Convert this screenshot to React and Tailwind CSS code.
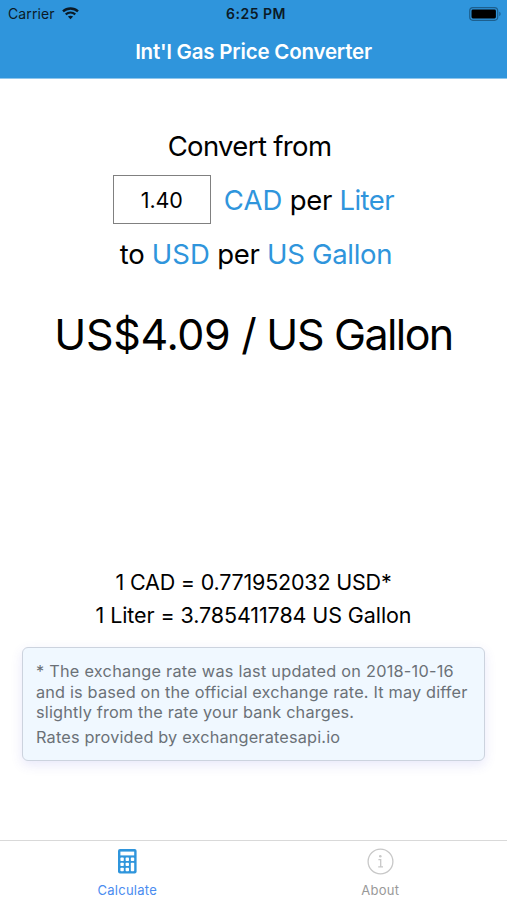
import React from "react"

const WifiIcon = () => (
  <svg width="17" height="13" viewBox="0 0 17 13" fill="none">
    <path d="M1 4.4C5.2 .6 11.8 .6 16 4.4" stroke="#0b1a26" strokeWidth="2.4" />
    <path d="M3.7 7.4C6.5 5 10.5 5 13.3 7.4" stroke="#0b1a26" strokeWidth="2.1" />
    <path d="M8.5 12.2L5.9 9.6C7.3 8.3 9.7 8.3 11.1 9.6Z" fill="#0b1a26" />
  </svg>
)

const BatteryIcon = () => (
  <svg width="33" height="14" viewBox="0 0 33 14" fill="none">
    <rect x=".7" y=".7" width="28" height="12.6" rx="3.2" stroke="#1d5f8e" strokeWidth="1.2" />
    <rect x="2.5" y="2.5" width="24.4" height="9" rx="1.4" fill="#000" />
    <path d="M30.3 4.8C32 5.4 32 8.6 30.3 9.2Z" fill="#1d5f8e" />
  </svg>
)

const CalculatorIcon = () => (
  <svg width="19" height="25" viewBox="0 0 19 25">
    <rect width="18.6" height="24.6" rx="2" fill="#2f95dc" />
    <g fill="#fff">
      <rect x="2.4" y="2.6" width="13.8" height="3.8" />
      <rect x="2.4" y="8.6" width="3.4" height="3.4" rx=".8" />
      <rect x="7.6" y="8.6" width="3.4" height="3.4" rx=".8" />
      <rect x="12.8" y="8.6" width="3.4" height="3.4" rx=".8" />
      <rect x="2.4" y="13.7" width="3.4" height="3.4" rx=".8" />
      <rect x="7.6" y="13.7" width="3.4" height="3.4" rx=".8" />
      <rect x="2.4" y="18.8" width="3.4" height="3.4" rx=".8" />
      <rect x="7.6" y="18.8" width="3.4" height="3.4" rx=".8" />
      <rect x="12.8" y="13.7" width="3.4" height="8.5" rx=".8" />
    </g>
  </svg>
)

const InfoIcon = () => (
  <svg width="27" height="27" viewBox="0 0 27 27" fill="none" stroke="#c8c8c8">
    <circle cx="13.5" cy="13.5" r="12.4" strokeWidth="1.3" />
    <circle cx="13.3" cy="8.2" r="1.3" fill="#c8c8c8" stroke="none" />
    <path d="M11.4 11.6H13.7V18.8M11.2 18.9H16" strokeWidth="1.3" />
  </svg>
)

const Header = () => {
  return (
    <header className="h-[79px] bg-[#2f95dc] border-b border-[#8ec6ec]">
      <div className="grid grid-cols-3 items-center h-[27px] pl-2 pr-[5px] text-[#0b1a26]">
        <div className="flex items-center gap-[7px]">
          <span className="text-[14px] tracking-[0.1px]">Carrier</span>
          <WifiIcon />
        </div>
        <span className="pl-[2px] text-center text-[14px] font-semibold tracking-[0.5px]">
          6:25 PM
        </span>
        <div className="flex justify-end">
          <BatteryIcon />
        </div>
      </div>
      <h1 className="text-center text-white text-[20.5px] leading-[50px] font-semibold tracking-[-0.2px]">
        Int'l Gas Price Converter
      </h1>
    </header>
  )
}

const Converter = () => {
  return (
    <section className="text-center text-[27.5px] leading-[54px] tracking-[-0.2px] whitespace-nowrap">
      <p className="pr-2 tracking-[-0.65px]">Convert from</p>
      <div className="flex items-center justify-center h-[54px]">
        <input
          className="w-[98px] h-[49px] mr-[13px] mb-px border border-[#808080] text-center text-[21.5px] tracking-[-0.1px]"
          defaultValue="1.40"
        />
        <p className="tracking-[-0.35px]">
          <span className="text-[#2f95dc] tracking-[0.1px]">CAD</span> per{" "}
          <span className="text-[#2f95dc] tracking-[-0.5px]">Liter</span>
        </p>
      </div>
      <p className="pl-[5px] tracking-[-0.3px]">
        to <span className="text-[#2f95dc] tracking-[0px]">USD</span> per{" "}
        <span className="text-[#2f95dc]">US Gallon</span>
      </p>
    </section>
  )
}

const RateNote = () => {
  return (
    <div className="mx-[22px] mt-[14px] h-[114px] pt-[13px] px-[13px] bg-[#f0f8ff] border border-[#ccd3de] rounded-md shadow-[0_4px_12px_rgba(80,80,220,0.13)] text-[16.3px] leading-[20.5px] tracking-[0.17px] text-[#6b7177] whitespace-nowrap">
      <p>
        <span className="tracking-[0.25px]">
          * The exchange rate was last updated on 2018-10-16
        </span>
        <br />
        and is based on the official exchange rate. It may differ
        <br />
        slightly from the rate your bank charges.
      </p>
      <p className="mt-[4px]">Rates provided by exchangeratesapi.io</p>
    </div>
  )
}

const TabBar = () => {
  return (
    <nav className="grid grid-cols-2 h-[60px] border-t border-[#d9d9d9] text-[13px] leading-4 tracking-[0.25px]">
      <a className="flex flex-col items-center text-[#4a8cf0]">
        <div className="flex items-center h-[41px] pl-[2px]">
          <CalculatorIcon />
        </div>
        <span className="pl-px">Calculate</span>
      </a>
      <a className="flex flex-col items-center text-[#999]">
        <div className="flex items-center h-[41px]">
          <InfoIcon />
        </div>
        <span>About</span>
      </a>
    </nav>
  )
}

const App = () => {
  return (
    <div className="flex flex-col h-screen bg-white text-black font-['Inter',sans-serif]">
      <Header />
      <main className="flex-1 pt-[40px]">
        <Converter />
        <p className="mt-[26px] text-center text-[43px] leading-[54px] tracking-[-1.3px] whitespace-nowrap">
          <span className="tracking-[-0.35px]">US$4.09</span> / US{" "}
          <span className="tracking-[-1.6px]">Gallon</span>
        </p>
        <div className="mt-[205px] mb-[15px] text-center text-[21.5px] leading-[33px] tracking-[-0.2px] whitespace-nowrap">
          <p>1 CAD = 0.771952032 USD*</p>
          <p className="tracking-[-0.1px]">1 Liter = 3.785411784 US Gallon</p>
        </div>
        <RateNote />
      </main>
      <TabBar />
    </div>
  )
}

export default App
